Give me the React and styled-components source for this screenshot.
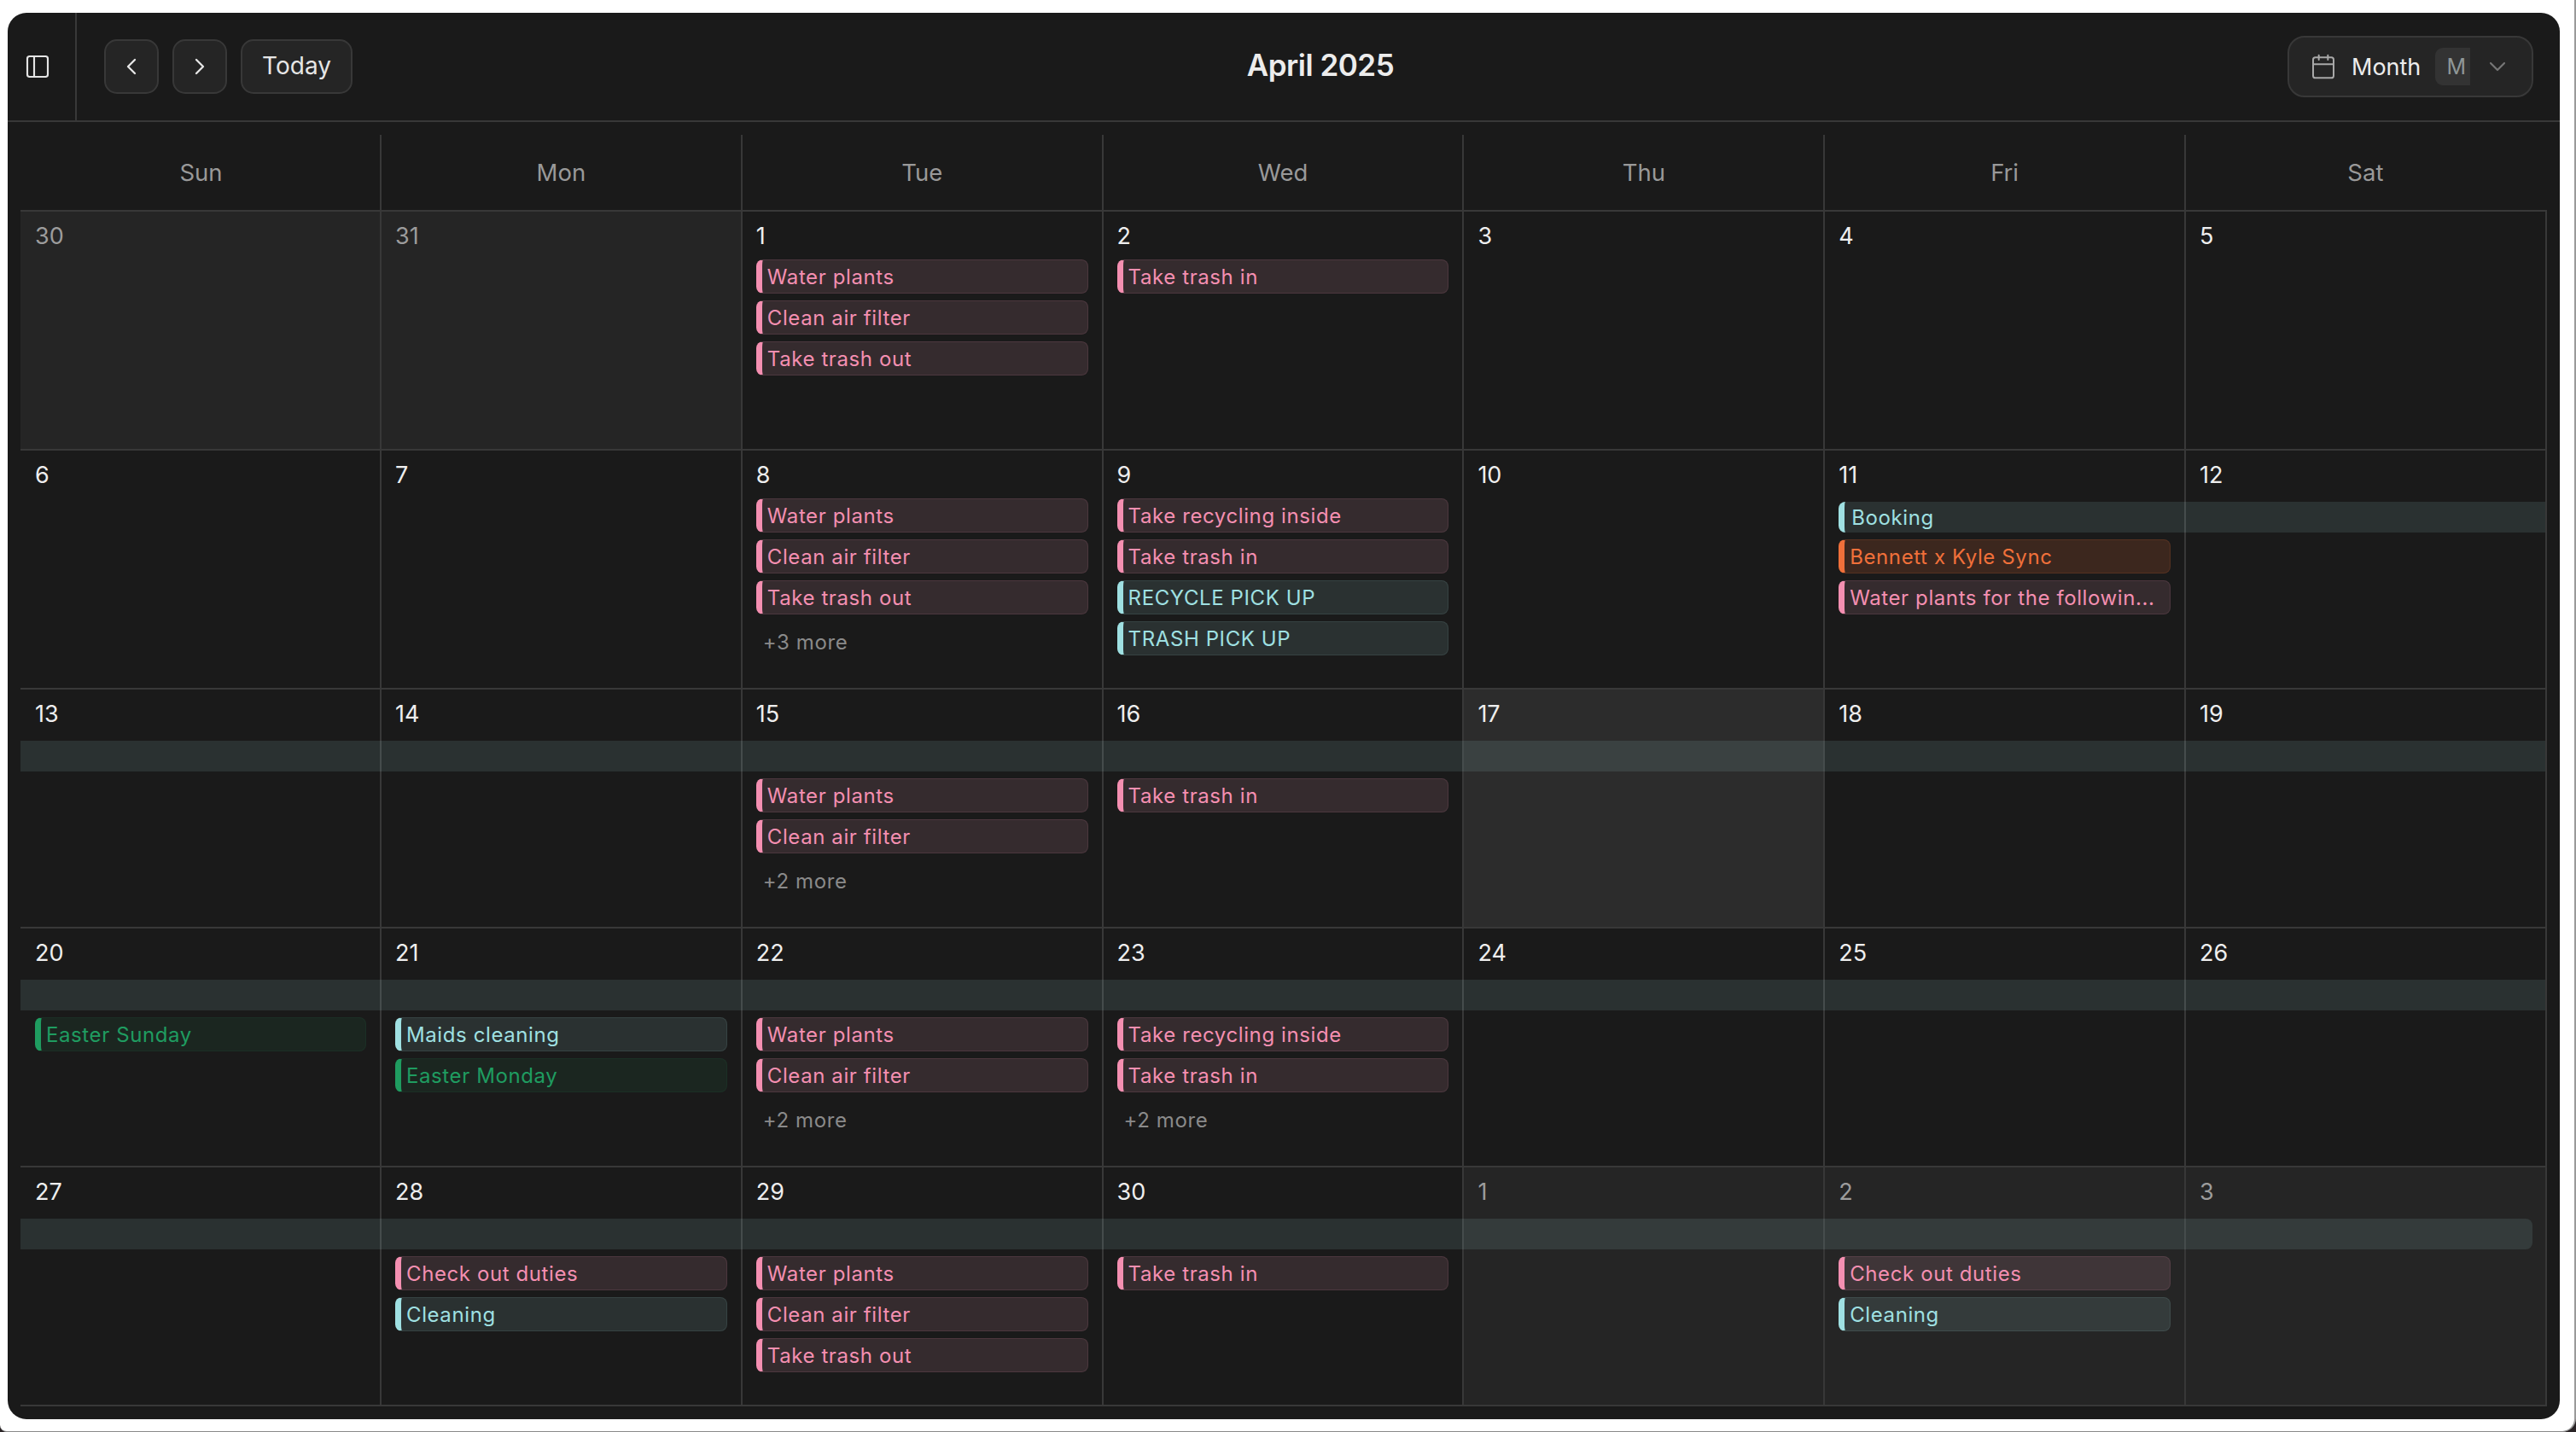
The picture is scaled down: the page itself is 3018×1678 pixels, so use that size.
import React from 'react';
import styled, { createGlobalStyle } from 'styled-components';
import { PanelLeft, ChevronLeft, ChevronRight, ChevronDown, Calendar } from 'lucide-react';

const GlobalStyle = createGlobalStyle`
  html, body {
    margin: 0;
    padding: 0;
    background: #2a2426;
  }
  * {
    box-sizing: border-box;
  }
`;

const Page = styled.div`
  width: 3018px;
  height: 1678px;
  padding: 15px 17px 13px 9px;
  background: #ffffff;
  border-right: 2px solid #9a9a9a;
  border-bottom: 1px solid #8a8a8a;
  border-radius: 0 0 16px 8px;
  font-family: Inter, 'Noto Sans', sans-serif;
`;

const Window = styled.div`
  width: 2990px;
  height: 1648px;
  display: flex;
  flex-direction: column;
  background: #1a1a1a;
  border-radius: 22px;
  overflow: hidden;
`;

const Toolbar = styled.header`
  height: 128px;
  flex: none;
  display: flex;
  border-bottom: 2px solid #383838;
`;

const SidebarToggle = styled.div`
  width: 81px;
  flex: none;
  display: flex;
  align-items: center;
  padding-left: 19px;
  color: #e4e4e4;
  border-right: 2px solid #383838;
`;

const ToolbarMain = styled.div`
  flex: 1;
  display: grid;
  grid-template-columns: 1fr auto 1fr;
  align-items: center;
  padding: 0 31px 0 32px;
`;

const NavGroup = styled.div`
  display: flex;
  gap: 16px;
`;

const NavButton = styled.button`
  height: 64px;
  min-width: 64px;
  padding: ${(p) => (p.$wide ? '0 0 2px' : '0')};
  width: ${(p) => (p.$wide ? '131px' : '64px')};
  display: flex;
  align-items: center;
  justify-content: center;
  background: #252525;
  border: 2px solid #383838;
  border-radius: 15px;
  color: #e6e6e6;
  font-family: inherit;
  font-size: 28px;
  font-weight: 400;
`;

const Title = styled.h1`
  margin: 0 0 4px 4px;
  font-size: 35px;
  font-weight: 600;
  letter-spacing: -0.5px;
  color: #ececec;
`;

const ViewSelect = styled.div`
  justify-self: end;
  height: 72px;
  width: 288px;
  display: flex;
  align-items: center;
  padding-left: 24px;
  background: #252525;
  border: 2px solid #383838;
  border-radius: 20px;
  color: #ececec;
  font-size: 27px;
`;

const ViewIcon = styled.span`
  display: flex;
  margin-right: 17px;
  color: #a8a8a8;
`;

const Shortcut = styled.span`
  width: 41px;
  height: 44px;
  margin-left: 17px;
  margin-right: 16px;
  padding-left: 8px;
  display: flex;
  align-items: center;
  justify-content: center;
  background: #333333;
  border-radius: 9px 0 0 9px;
  color: #8f9797;
  font-size: 25px;
`;

const ViewChevron = styled.span`
  display: flex;
  color: #767676;
`;

const Board = styled.main`
  flex: 1;
  padding: 15px 14px 0 15px;
`;

const columns = '421px repeat(6, 422.8px)';

const Weekdays = styled.div`
  height: 88px;
  display: grid;
  grid-template-columns: ${columns};
`;

const Weekday = styled.div`
  display: flex;
  align-items: center;
  justify-content: center;
  border-left: 2px solid ${(p) => (p.$first ? 'transparent' : '#383838')};
  color: #999999;
  font-size: 27.5px;
`;

const Weeks = styled.div`
  width: 2960px;
  border-right: 2px solid #383838;
  border-bottom: 2px solid #383838;
`;

const Week = styled.div`
  position: relative;
  height: 280px;
  display: grid;
  grid-template-columns: ${columns};
  border-top: 2px solid #383838;
`;

const shades = {
  plain: '#1a1a1a',
  outside: '#252525',
  today: '#2c2c2c',
};

const DayCell = styled.div`
  min-width: 0;
  padding: 12px 16px 0 ${(p) => (p.$first ? '15px' : '16px')};
  background: ${(p) => shades[p.$shade]};
  border-left: 2px solid ${(p) => (p.$first ? 'transparent' : '#383838')};
`;

const DayNumber = styled.div`
  height: 34px;
  font-size: 27px;
  line-height: 34px;
  color: ${(p) => (p.$muted ? '#9c9c9c' : '#eeeeee')};
`;

const EventList = styled.div`
  display: flex;
  flex-direction: column;
  gap: 8px;
  margin-top: ${(p) => 10 + p.$lanes * 48}px;
`;

const tones = {
  pink: { line: '#f48fb1', soft: 'rgba(240, 160, 185, 0.13)', edge: 'rgba(240, 150, 180, 0.12)' },
  teal: { line: '#9fe0e2', soft: 'rgba(168, 225, 225, 0.12)', edge: 'rgba(168, 225, 225, 0.1)' },
  orange: { line: '#f0703a', soft: 'rgba(242, 112, 58, 0.16)', edge: 'rgba(242, 112, 58, 0.14)' },
  green: { line: '#1f9c60', soft: 'rgba(40, 170, 100, 0.09)', edge: 'rgba(40, 170, 100, 0.08)' },
};

const EventPill = styled.div`
  height: 40px;
  display: flex;
  align-items: center;
  padding: 0 6px;
  background: ${(p) => tones[p.$tone].soft};
  border: 1px solid ${(p) => tones[p.$tone].edge};
  border-left: 7px solid ${(p) => tones[p.$tone].line};
  border-radius: 8px;
  color: ${(p) => tones[p.$tone].line};
  font-size: 24px;
  letter-spacing: 0.6px;
  white-space: nowrap;
  overflow: hidden;
`;

const MoreLink = styled.div`
  height: 48px;
  display: flex;
  align-items: center;
  padding-left: 8px;
  color: #8a8a8a;
  font-size: 24px;
  letter-spacing: 0.6px;
`;

// spans several days, sits over the cells so the grid lines show through
const SpanBar = styled.div`
  position: absolute;
  top: 60px;
  height: 36px;
  grid-column: ${(p) => p.$from} / ${(p) => p.$to};
  left: ${(p) => (p.$label ? '18px' : '0')};
  right: ${(p) => (p.$short ? '15px' : '0')};
  display: flex;
  align-items: center;
  padding-left: 8px;
  background: rgba(168, 225, 225, 0.12);
  border-left: ${(p) => (p.$label ? '7px solid #9fe0e2' : 'none')};
  border-radius: ${(p) => (p.$label ? '8px 0 0 8px' : p.$short ? '0 8px 8px 0' : '0')};
  color: #9fe0e2;
  font-size: 24px;
  letter-spacing: 0.6px;
`;

const ev = (title, tone) => ({ title, tone });
const waterPlants = ev('Water plants', 'pink');
const airFilter = ev('Clean air filter', 'pink');
const trashOut = ev('Take trash out', 'pink');
const trashIn = ev('Take trash in', 'pink');
const recycleIn = ev('Take recycling inside', 'pink');
const checkOut = ev('Check out duties', 'pink');
const cleaning = ev('Cleaning', 'teal');

const day = (date, events = [], extra = {}) => ({ date, events, ...extra });
const out = { shade: 'outside', muted: true };

const weeks = [
  {
    lanes: 0,
    bars: [],
    days: [
      day(30, [], out),
      day(31, [], out),
      day(1, [waterPlants, airFilter, trashOut]),
      day(2, [trashIn]),
      day(3),
      day(4),
      day(5),
    ],
  },
  {
    lanes: 0,
    bars: [{ from: 6, to: 8, label: 'Booking' }],
    days: [
      day(6),
      day(7),
      day(8, [waterPlants, airFilter, trashOut], { more: 3 }),
      day(9, [recycleIn, trashIn, ev('RECYCLE PICK UP', 'teal'), ev('TRASH PICK UP', 'teal')]),
      day(10),
      day(
        11,
        [ev('Bennett x Kyle Sync', 'orange'), ev('Water plants for the followin...', 'pink')],
        { lanes: 1 }
      ),
      day(12),
    ],
  },
  {
    lanes: 1,
    bars: [{ from: 1, to: 8 }],
    days: [
      day(13),
      day(14),
      day(15, [waterPlants, airFilter], { more: 2 }),
      day(16, [trashIn]),
      day(17, [], { shade: 'today' }),
      day(18),
      day(19),
    ],
  },
  {
    lanes: 1,
    bars: [{ from: 1, to: 8 }],
    days: [
      day(20, [ev('Easter Sunday', 'green')]),
      day(21, [ev('Maids cleaning', 'teal'), ev('Easter Monday', 'green')]),
      day(22, [waterPlants, airFilter], { more: 2 }),
      day(23, [recycleIn, trashIn], { more: 2 }),
      day(24),
      day(25),
      day(26),
    ],
  },
  {
    lanes: 1,
    bars: [{ from: 1, to: 8, short: true }],
    days: [
      day(27),
      day(28, [checkOut, cleaning]),
      day(29, [waterPlants, airFilter, trashOut]),
      day(30, [trashIn]),
      day(1, [], out),
      day(2, [checkOut, cleaning], out),
      day(3, [], out),
    ],
  },
];

const weekdayNames = ['Sun', 'Mon', 'Tue', 'Wed', 'Thu', 'Fri', 'Sat'];

const App = () => {
  return (
    <Page>
      <GlobalStyle />
      <Window>
        <Toolbar>
          <SidebarToggle>
            <PanelLeft size={32} strokeWidth={1.6} />
          </SidebarToggle>
          <ToolbarMain>
            <NavGroup>
              <NavButton aria-label="Previous">
                <ChevronLeft size={32} strokeWidth={1.75} />
              </NavButton>
              <NavButton aria-label="Next">
                <ChevronRight size={32} strokeWidth={1.75} />
              </NavButton>
              <NavButton $wide>Today</NavButton>
            </NavGroup>
            <Title>April 2025</Title>
            <ViewSelect>
              <ViewIcon>
                <Calendar size={32} strokeWidth={1.5} />
              </ViewIcon>
              Month
              <Shortcut>M</Shortcut>
              <ViewChevron>
                <ChevronDown size={32} strokeWidth={1.6} />
              </ViewChevron>
            </ViewSelect>
          </ToolbarMain>
        </Toolbar>
        <Board>
          <Weekdays>
            {weekdayNames.map((name, i) => (
              <Weekday key={name} $first={i === 0}>
                {name}
              </Weekday>
            ))}
          </Weekdays>
          <Weeks>
            {weeks.map((week, w) => (
              <Week key={w}>
                {week.days.map((d, i) => (
                  <DayCell key={i} $first={i === 0} $shade={d.shade || 'plain'}>
                    <DayNumber $muted={d.muted}>{d.date}</DayNumber>
                    <EventList $lanes={d.lanes ?? week.lanes}>
                      {d.events.map((e, k) => (
                        <EventPill key={k} $tone={e.tone}>
                          {e.title}
                        </EventPill>
                      ))}
                      {d.more && <MoreLink>+{d.more} more</MoreLink>}
                    </EventList>
                  </DayCell>
                ))}
                {week.bars.map((b, k) => (
                  <SpanBar key={k} $from={b.from} $to={b.to} $label={b.label} $short={b.short}>
                    {b.label}
                  </SpanBar>
                ))}
              </Week>
            ))}
          </Weeks>
        </Board>
      </Window>
    </Page>
  );
};

export default App;
